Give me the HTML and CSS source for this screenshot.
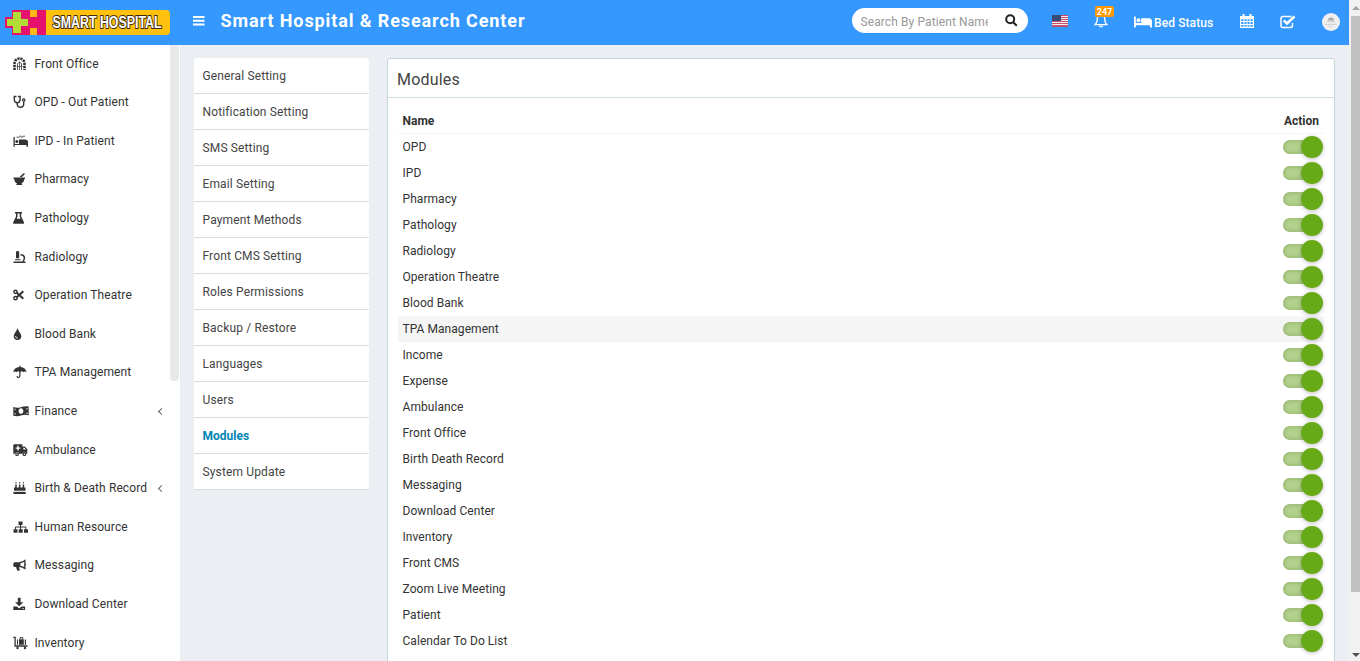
FILE: index.html
```html
<!DOCTYPE html>
<html lang="en">
<head>
<meta charset="utf-8">
<title>Smart Hospital &amp; Research Center</title>
<link rel="stylesheet" href="styles.css">
</head>
<body>
<div class="app">
  <div class="page">
    <header class="topbar">
      <svg class="logo" viewBox="0 0 166 26" width="166" height="26">
        <rect x="30" y="0" width="135" height="25" rx="4" fill="#ffc10e"/>
        <path d="M7 0h34v25H7v-7H0V7h7z" fill="#e5116c"/>
        <path d="M25 0h7v7h-7zM25 18h7v7h-7z" fill="#fdb913"/>
        <path d="M8 2h8v7h7v7h-7v7H8v-7H2V9h6z" fill="#b2dc36"/>
        <text class="logo-text" x="47.500" y="18" textLength="109" lengthAdjust="spacingAndGlyphs">SMART HOSPITAL</text>
      </svg>
      <svg class="burger" viewBox="0 0 12 10" width="12" height="10"><path d="M0 0h11.500v2H0zM0 3.700h11.500v2H0zM0 7.400h11.500v2H0z" fill="#fff"/></svg>
      <h1 class="brand">Smart Hospital &amp; Research Center</h1>
      <div class="search">
        <span class="search-text">Search By Patient Name</span>
        <svg viewBox="0 0 13 13" width="13" height="13" fill="none" stroke="#222" stroke-width="2"><circle cx="5.200" cy="5.200" r="4"/><path d="M8.200 8.200l3.600 3.600"/></svg>
      </div>
      <svg class="flag" viewBox="0 0 16 12" width="16" height="12"><path fill="#f3eef2" d="M0 0h16v12H0z"/><path fill="#c4506a" d="M0 0h16v1H0zM0 2h16v1H0zM0 4h16v1H0zM0 6h16v1H0zM0 8h16v1H0zM0 10h16v2H0z"/><path fill="#394a75" d="M0 0h9v6H0z"/></svg>
      <div class="bell">
        <svg viewBox="0 0 14 15" width="14" height="15" fill="none" stroke="#fff" stroke-width="1.300"><path d="M7 .5v1.200M1 11.700c2-1.700 2.400-4 2.400-6.700C3.400 3 5 1.900 7 1.900S10.600 3 10.600 5c0 2.700.4 5 2.400 6.700z"/><path d="M5.400 12.500c.2 1.700 3 1.700 3.200 0"/></svg>
        <span class="badge">247</span>
      </div>
      <div class="bed">
        <svg viewBox="0 0 18 12" width="18" height="12" fill="#fff"><path d="M0 .5h1.800v6.500H18V11.500H16V9.300H1.800v2.200H0z"/><circle cx="4.500" cy="4.300" r="2"/><path d="M7.200 2.300h8q2.800.3 2.800 3v2H7.200z"/></svg>
        <span>Bed Status</span>
      </div>
      <svg class="calendar" viewBox="0 0 14 14" width="14" height="14" fill="#fff"><path fill-rule="evenodd" d="M0 2h2.500V0h2v2h5V0h2v2H14v12H0zM1.200 5.200v1.800H3.500V5.200zM4.500 5.200v1.800H6.500V5.200zM7.500 5.200v1.800H9.500V5.200zM10.500 5.200v1.800h2.300V5.200zM1.200 8v2H3.500V8zM4.500 8v2H6.500V8zM7.500 8v2H9.500V8zM10.500 8v2h2.300V8zM1.200 11v1.800H3.500V11zM4.500 11v1.800H6.500V11zM7.500 11v1.800H9.500V11zM10.500 11v1.800h2.300V11z"/></svg>
      <svg class="tasks" viewBox="0 0 16 14" width="16" height="14" fill="none" stroke="#fff"><path stroke-width="1.500" d="M11.500 1.500H3q-2 0-2 2v7q0 2 2 2h7.500q2 0 2-2V8"/><path stroke-width="2.500" d="M3.800 5.300l3.200 3.200 7.500-7"/></svg>
      <svg class="avatar" viewBox="0 0 18 18" width="18" height="18"><circle cx="9" cy="9" r="9" fill="#f0f0f0"/><path d="M6 7.500q0-3 3-3t3 3z" fill="#aaa"/><path d="M5 8.500h8M3.500 11.300h11" stroke="#c4c4c4" stroke-dasharray="2 .5"/><path d="M6 13.500h6" stroke="#ddd"/></svg>
    </header>

    <div class="body">
      <nav class="sidebar">
        <ul class="menu">
          <li><svg class="ico" viewBox="0 0 16 14"><path d="M1.500 13V6.500a5 5 0 0 1 10 0V13" fill="none" stroke="#333" stroke-width="2.600" stroke-dasharray="2.200 .8"/><path d="M4.500 13V6.500q2-2.400 4 0V13" fill="none" stroke="#333" stroke-width=".8"/><path d="M6.500 4.500V13M3.500 9.500h6" stroke="#333" stroke-width=".7"/></svg>Front Office</li>
          <li><svg class="ico" viewBox="0 0 16 14"><path d="M3.500 1.500H1.300v3.300q.2 3 2.900 3t2.900-3V1.500H5M4.200 8v1.500q.3 2.800 3.300 2.800t3.200-3V6.500" fill="none" stroke="#333" stroke-width="1.400"/><circle cx="10.700" cy="5" r="1.200" fill="none" stroke="#333" stroke-width="1.200"/></svg>OPD - Out Patient</li>
          <li><svg class="ico" viewBox="0 0 16 14"><path d="M.5 3h1.300v7H15V12.700h-1.500V11H1.800v1.700H.5zM6 5.500h6.500Q15 5.700 15 8V10H6z"/><circle cx="3.900" cy="7.600" r="1.500"/><path d="M3.500 3.200h3l1-1.500L9 3.700l1-1.500h2" fill="none" stroke="#333" stroke-width=".8"/></svg>IPD - In Patient</li>
          <li><svg class="ico" viewBox="0 0 16 14"><path d="M.5 5.500h11.500v1.400h-.8q0 3.300-2.700 4.300l.9 1.800H3.100l.9-1.800Q1.300 10.200 1.300 6.900H.5zM6.500 5l4-3.800q1.300-.3 1.400.9L9 5z"/></svg>Pharmacy</li>
          <li><svg class="ico" viewBox="0 0 16 14"><path fill-rule="evenodd" d="M2 1h7v1.400h-.8v3.200l2.900 5.900q.3 1-.8 1.300H.9q-1.100-.3-.8-1.300L3 5.600V2.400H2zm2.500 1.400v3.400L3.600 7.700h4L6.700 5.800V2.400z"/></svg>Pathology</li>
          <li><svg class="ico" viewBox="0 0 16 14"><path d="M3 2l.8-1h1.600l.8 1v6.300H3zM2 9.300h5.500v1H2zM.5 11.500h12V13H.5z"/><path d="M7.500 4.700q3.900.2 3.900 3.300 0 2.300-1.700 3.800" fill="none" stroke="#333" stroke-width="1.500"/></svg>Radiology</li>
          <li><svg class="ico" viewBox="0 0 16 14"><g fill="none" stroke="#333"><circle cx="2.500" cy="3.800" r="1.600" stroke-width="1.500"/><circle cx="2.500" cy="10.200" r="1.600" stroke-width="1.500"/><path stroke-width="2" d="M3.800 4.800l6.500 6M3.800 9.200l6.500-6"/></g></svg>Operation Theatre</li>
          <li><svg class="ico" viewBox="0 0 16 14"><path d="M4.500 1q.6 2.400 2.400 4.800C9.800 9.800 7.700 13 4.500 13S-.8 9.800 2.100 5.800Q3.900 3.400 4.500 1z"/><path d="M2.500 9q.2 2 2.200 2.200" fill="none" stroke="#fff" stroke-width=".9"/></svg>Blood Bank</li>
          <li><svg class="ico" viewBox="0 0 16 14"><path d="M6.300.8h1.200v1.100q5 .4 6.300 5.400-1.800-1.800-3.400 0-1.600-1.900-3.500 0-1.900-1.900-3.500 0-1.600-1.800-3.400 0Q1.300 2.300 6.300 1.900z"/><path d="M6.900 6v5q-.2 1.600-1.500 1.600T4 11" fill="none" stroke="#333" stroke-width="1.200"/></svg>TPA Management</li>
          <li><svg class="ico" viewBox="0 0 16 14"><path fill-rule="evenodd" d="M.3 3q3.800 1.500 7.500.2T15.700 2.500v8.800q-3.900-1.200-7.700.1t-7.700.3zM8 4.300C4.800 4.500 4.800 9.900 8 9.900S11.200 4.300 8 4.300z"/><path d="M2 4.700v1.500M14 4v1.500M2 9v1.500M14 8.500V10" stroke="#fff" stroke-width=".9"/></svg>Finance<i class="chev"></i></li>
          <li><svg class="ico" viewBox="0 0 16 14"><path d="M1 1.200h8.300v2.300h2.500l2.500 2.800v4.500h-1a1.900 1.900 0 0 0-3.700 0H6a1.900 1.900 0 0 0-3.800 0H.3V2z"/><path d="M5 2.800v4.600M2.700 5.100h4.600" stroke="#fff" stroke-width="1.400"/><path d="M10.300 4.700h1.200l1.400 1.700h-2.600z" fill="#fff"/><g fill="#fff" stroke="#333" stroke-width="1.200"><circle cx="4.100" cy="11.200" r="1.300"/><circle cx="11.400" cy="11.200" r="1.300"/></g></svg>Ambulance</li>
          <li><svg class="ico" viewBox="0 0 16 14"><path d="M1 6.500h11.500v2.800q-1.400 1.200-2.900 0-1.500 1.200-2.900 0-1.500 1.200-2.900 0Q2.400 10.500 1 9.300zM.5 10.500q1.300 1 3.100 0 1.600 1 3.100 0 1.600 1 3.200 0 1.600 1 2.800 0V13H.5z"/><path d="M3 7V3.500M6.700 7V3.500M10.400 7V3.500" stroke="#333" stroke-width="1.500"/><path d="M3 1v1.500M6.700 1v1.500M10.400 1v1.500" stroke="#333"/></svg>Birth &amp; Death Record<i class="chev"></i></li>
          <li><svg class="ico" viewBox="0 0 16 14"><path d="M5.500 1.500h4v3.400h-4zM.5 9.300h4v3.400h-4zM5.700 9.300h4v3.400h-4zM11 9.300h4v3.400h-4z"/><path d="M7.500 4.500v5M2.500 9.500V7h10.300v2.500" fill="none" stroke="#333"/></svg>Human Resource</li>
          <li><svg class="ico" viewBox="0 0 16 14"><path fill-rule="evenodd" d="M1.300 4.300H6Q9.500 4 12.500 1.200v4.300q1.300 1 0 2v4.300Q9.500 9.300 6 9l.9 3.500-2.600.3L3 9H1.300Q.2 8.500.2 6.700t1.100-2.400zM7.400 5.200v2.600q2 .1 3.800 1.300V3.700Q9.400 5 7.400 5.200z"/></svg>Messaging</li>
          <li><svg class="ico" viewBox="0 0 16 14"><path d="M4.800.8h2.800v4.400h2.700L6.200 9.300 2.100 5.200h2.700zM.3 9.500h3.500l2.400 2 2.400-2h3.500V13H.3z"/><path d="M9.500 11.500h1.200" stroke="#fff"/></svg>Download Center</li>
          <li><svg class="ico" viewBox="0 0 16 14"><path d="M.2 1.300h1.900V10H14.500" fill="none" stroke="#333" stroke-width="1.300"/><path d="M4 3.500h1v5.200H4zM6 3.200h4.800v5.500H6zM11.800 3.500h1.200v5.200h-1.200z"/><path d="M7 3V1.700h2.800V3" fill="none" stroke="#333"/><circle cx="4.500" cy="12" r="1.200"/><circle cx="12" cy="12" r="1.200"/></svg>Inventory</li>
        </ul>
        <div class="side-thumb"></div>
      </nav>

      <main class="content">
        <ul class="settings">
          <li>General Setting</li>
          <li>Notification Setting</li>
          <li>SMS Setting</li>
          <li>Email Setting</li>
          <li>Payment Methods</li>
          <li>Front CMS Setting</li>
          <li>Roles Permissions</li>
          <li>Backup / Restore</li>
          <li>Languages</li>
          <li>Users</li>
          <li class="active">Modules</li>
          <li>System Update</li>
        </ul>
        <section class="panel">
          <h2 class="panel-title">Modules</h2>
          <div class="table">
            <div class="row head"><span>Name</span><span>Action</span></div>
            <div class="row"><span>OPD</span><i class="switch"></i></div>
            <div class="row"><span>IPD</span><i class="switch"></i></div>
            <div class="row"><span>Pharmacy</span><i class="switch"></i></div>
            <div class="row"><span>Pathology</span><i class="switch"></i></div>
            <div class="row"><span>Radiology</span><i class="switch"></i></div>
            <div class="row"><span>Operation Theatre</span><i class="switch"></i></div>
            <div class="row"><span>Blood Bank</span><i class="switch"></i></div>
            <div class="row hover"><span>TPA Management</span><i class="switch"></i></div>
            <div class="row"><span>Income</span><i class="switch"></i></div>
            <div class="row"><span>Expense</span><i class="switch"></i></div>
            <div class="row"><span>Ambulance</span><i class="switch"></i></div>
            <div class="row"><span>Front Office</span><i class="switch"></i></div>
            <div class="row"><span>Birth Death Record</span><i class="switch"></i></div>
            <div class="row"><span>Messaging</span><i class="switch"></i></div>
            <div class="row"><span>Download Center</span><i class="switch"></i></div>
            <div class="row"><span>Inventory</span><i class="switch"></i></div>
            <div class="row"><span>Front CMS</span><i class="switch"></i></div>
            <div class="row"><span>Zoom Live Meeting</span><i class="switch"></i></div>
            <div class="row"><span>Patient</span><i class="switch"></i></div>
            <div class="row"><span>Calendar To Do List</span><i class="switch"></i></div>
          </div>
        </section>
      </main>
    </div>
  </div>
  <div class="scrollbar">
    <i class="arrow up"></i>
    <div class="thumb"></div>
    <i class="arrow down"></i>
  </div>
</div>
</body>
</html>
```
FILE: styles.css
```css
* { box-sizing: border-box; }
body { margin: 0; font-family: Roboto, "Liberation Sans", sans-serif; font-size: 12px; color: #333; overflow: hidden; }
ul { list-style: none; margin: 0; padding: 0; }
svg { display: block; flex: none; }
.app { display: flex; width: 1360px; height: 661px; overflow: hidden; }
.page { display: flex; flex-direction: column; width: 1349px; background: #ebeff4; }

.topbar { display: flex; align-items: flex-start; height: 45px; flex: none; background: #3498ff; color: #fff; padding-left: 5px; }
.logo { margin-top: 10px; overflow: visible; }
.logo-text { font: bold 16px "Liberation Sans", sans-serif; fill: #fff; stroke: #3b2b12; stroke-width: 2px; paint-order: stroke; }
.burger { margin: 16px 0 0 21.500px; }
.brand { margin: 9px 0 0 16px; width: 319.500px; flex: none; font-size: 18px; line-height: 24px; font-weight: 700; letter-spacing: .89px; white-space: nowrap; }
.search { display: flex; flex: none; align-items: center; justify-content: space-between; width: 176px; height: 25px; margin: 8px 0 0 312px; padding: 0 10px 0 8.500px; background: #fff; border-radius: 13px; }
.search-text { width: 127px; overflow: hidden; white-space: nowrap; color: #999; letter-spacing: .1px; line-height: 20px; padding-top: 2px; }
.flag { margin: 15px 0 0 24px; }
.bell { position: relative; margin: 13px 0 0 26px; }
.badge { position: absolute; left: 1px; top: -7px; width: 19px; height: 11px; border-radius: 2px; background: #ff9800; font-size: 9px; line-height: 12px; font-weight: 700; text-align: center; }
.bed { display: flex; gap: 2px; margin: 15px 0 0 26px; font-weight: 500; line-height: 16px; letter-spacing: .1px; width: 82px; white-space: nowrap; }
.bed svg { margin-top: 1px; }
.calendar { margin: 14px 0 0 24px; }
.tasks { margin: 15px 0 0 25.500px; }
.avatar { margin: 13px 0 0 26.500px; }

.body { display: flex; flex: 1; min-height: 0; }
.sidebar { display: flex; width: 180px; background: #fff; }
.menu { width: 170px; margin-top: -.6px; }
.menu li { display: flex; align-items: center; height: 38.6px; padding-left: 13px; letter-spacing: .1px; white-space: nowrap; }
.ico { width: 16px; height: 14px; margin-right: 5.500px; fill: #333; }
.chev { width: 5px; height: 5px; margin: 0 6px 0 auto; border-left: 1px solid #666; border-bottom: 1px solid #666; transform: rotate(45deg); }
.side-thumb { width: 9px; height: 336px; background: #e9e9e9; border-radius: 0 0 4px 4px; }

.content { display: flex; align-items: flex-start; gap: 18px; padding: 13px 14px 0 14px; flex: 1; }
.settings { width: 175px; background: #fff; border-radius: 3px 3px 0 0; }
.settings li { height: 36px; line-height: 37px; padding-left: 8.500px; border-bottom: 1px solid #ddd; letter-spacing: .14px; color: #444; }
.settings .active { color: #0084b4; font-weight: 700; letter-spacing: 0; }
.panel { flex: 1; height: 620px; background: #fff; border: 1px solid #c1d5e0; border-radius: 3px; }
.panel-title { margin: 0; height: 39px; padding-left: 9px; border-bottom: 1px solid #d2e0e6; font-size: 16px; line-height: 42px; font-weight: 400; letter-spacing: .2px; color: #444; }
.table { padding: 10px 10px 0 10px; }
.row { display: flex; align-items: center; justify-content: space-between; height: 26px; padding: 0 1px 0 4.500px; letter-spacing: .06px; }
.head { border-bottom: 1px solid #f4f4f4; font-weight: 700; padding-right: 5px; letter-spacing: 0; }
.hover { background: #f5f5f5; }
.switch { position: relative; width: 34px; height: 14px; margin-right: 6px; border-radius: 8px; background: #b2d18c; box-shadow: inset 0 0 4px rgba(60, 90, 30, .35); }
.switch::after { content: ""; position: absolute; left: 18px; top: -4px; width: 22px; height: 22px; border-radius: 50%; background: #66aa18; box-shadow: 0 1px 4px rgba(0, 0, 0, .25); }

.scrollbar { display: flex; flex-direction: column; align-items: center; width: 11px; background: #f1f1f1; padding-left: 2px; }
.thumb { width: 9px; height: 577px; background: #c1c1c1; }
.arrow { width: 0; height: 0; border: 4px solid transparent; }
.up { margin: 2px 0 6px; border-bottom-color: #a3a3a3; }
.down { margin-top: 61px; border-top-color: #505050; }
```
